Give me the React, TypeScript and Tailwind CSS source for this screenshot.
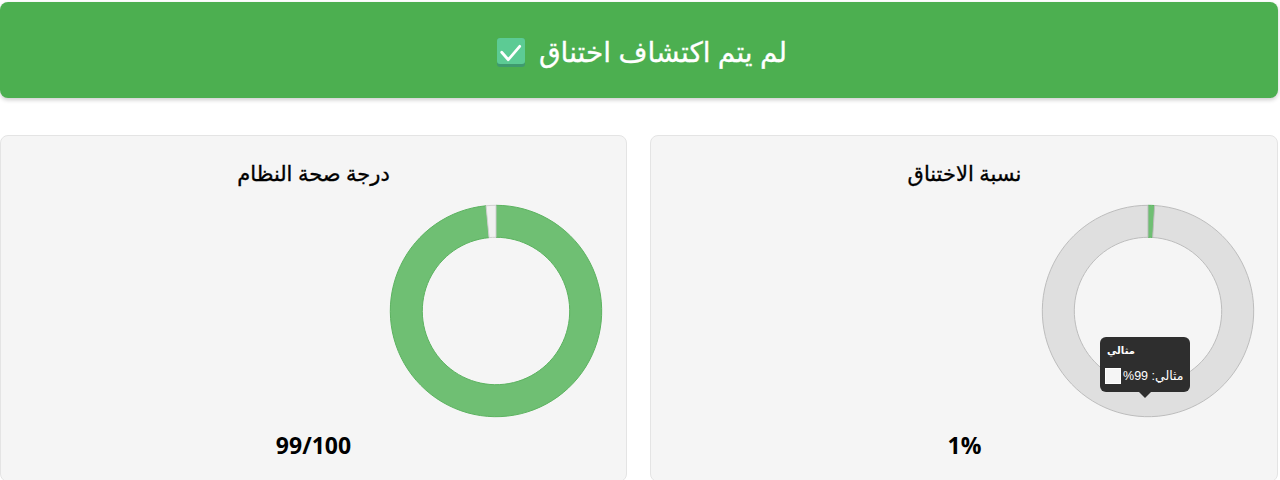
const FONT = "font-['Noto_Sans','DejaVu_Sans',sans-serif]";

function polar(cx: number, cy: number, r: number, deg: number) {
  const a = ((deg - 90) * Math.PI) / 180;
  return [cx + r * Math.cos(a), cy + r * Math.sin(a)];
}

function seg(from: number, to: number) {
  const [cx, cy, R, r] = [107, 107, 105.7, 73.7];
  const large = to - from > 180 ? 1 : 0;
  const [a, b] = polar(cx, cy, R, from);
  const [c, d] = polar(cx, cy, R, to);
  const [e, f] = polar(cx, cy, r, to);
  const [g, h] = polar(cx, cy, r, from);
  return `M${a} ${b}A${R} ${R} 0 ${large} 1 ${c} ${d}L${e} ${f}A${r} ${r} 0 ${large} 0 ${g} ${h}Z`;
}

function Donut({ split, high }: { split: number; high: boolean }) {
  return (
    <svg width="214" height="214" viewBox="0 0 214 214" className="block">
      <path d={seg(0, split)} fill="#6fbf73" stroke="#5cb360" strokeWidth="1" />
      <path d={seg(split, 360)} fill={high ? "#f0f0f0" : "#dfdfdf"} stroke={high ? "#d0d0d0" : "#bdbdbd"} strokeWidth="1" />
    </svg>
  );
}

function Card({ title, split, score, tooltip }: { title: string; split: number; score: string; tooltip?: boolean }) {
  return (
    <div className={`h-[347px] bg-[#f5f5f5] border border-[#e4e4e4] rounded-lg pt-[21px] pl-[23px] ${tooltip ? "w-[628px] pr-[22px]" : "w-[627px] pr-[23px]"}`}>
      <h3 className="text-center text-[21px] font-normal [-webkit-text-stroke:0.35px_#000] leading-[32px] text-black">{title}</h3>
      <div className="relative mt-[15px] w-[214px]">
        <Donut split={split} high={!tooltip} />
        {tooltip && (
          <div className="absolute left-[59px] top-[133px] w-[90px] h-[55px] rounded-md bg-[#2e2e2e] text-white pl-[5px] pr-[5px] pt-[6px] font-['DejaVu_Sans',sans-serif]">
            <div className="text-[10px] font-bold leading-[16px] text-left pl-[2px]">مثالي</div>
            <div dir="ltr" className="flex items-center gap-[2px] mt-[9px] text-[12.5px] leading-[16px] font-['Liberation_Sans','DejaVu_Sans',sans-serif]">
              <span className="w-[16px] h-[16px] shrink-0 bg-[#f5f5f5] border border-white" />
              <span dir="rtl" className="whitespace-nowrap">مثالي: 99%</span>
            </div>
            <div className="absolute left-[39px] top-full w-0 h-0 border-x-[6px] border-x-transparent border-t-[6px] border-t-[#2e2e2e]" />
          </div>
        )}
      </div>
      <div dir="ltr" className="mt-[12px] text-center text-[23px] font-bold leading-[30px] text-black font-['Open_Sans',sans-serif]">{score}</div>
    </div>
  );
}

export default function App() {
  return (
    <div dir="rtl" className={`${FONT} w-[1280px] h-[480px] overflow-hidden bg-white pr-[2px] pt-[2px]`}>
      <div className="h-[96px] pt-[5px] pl-[6px] rounded-lg bg-[#4caf50] shadow-[0_2px_4px_rgba(0,0,0,0.2)] flex items-center justify-center gap-[14px] text-white text-[28px] font-normal">
        <span className="-mt-[3px] [-webkit-text-stroke:0.3px_#fff]">لم يتم اكتشاف اختناق</span>
        <svg width="28" height="29" viewBox="0 0 28 29">
          <rect x="0" y="0" width="28" height="29" rx="3" fill="#3f9a6f" />
          <rect x="0" y="0" width="28" height="26" rx="3" fill="#5ccb94" />
          <path d="M4.7 14.3l6.6 7.4 11.4-13.4" fill="none" stroke="#fff" strokeWidth="2.8" strokeLinecap="round" strokeLinejoin="round" />
        </svg>
      </div>
      <div className="mt-[37px] flex gap-[23px]">
        <Card title="نسبة الاختناق" split={3.6} score="1%" tooltip />
        <Card title="درجة صحة النظام" split={354.6} score="99/100" />
      </div>
    </div>
  );
}
